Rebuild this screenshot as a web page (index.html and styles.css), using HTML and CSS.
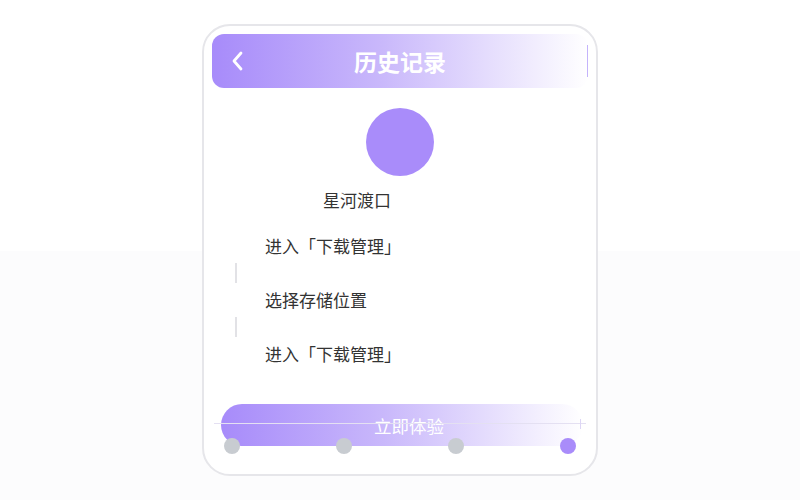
FILE: index.html
```html
<!DOCTYPE html>
<html lang="zh">
<head>
    <meta name="viewport" content="width=device-width, initial-scale=1">
    <title>历史记录</title>
    <link rel="stylesheet" href="styles.css">
</head>
<body>
    <div class="phone">
        <div class="header">
            <svg class="back" width="14" height="22" viewBox="0 0 14 22">
                <path d="M10 3 L3 11 L10 19" fill="none" stroke="white" stroke-width="2.8" stroke-linecap="round" stroke-linejoin="round"/>
            </svg>
            <p class="title">历史记录</p>
            <span class="edge"></span>
        </div>

        <div class="avatar"></div>
        <p class="name">星河渡口</p>

        <div class="steps">
            <p class="step">进入「下载管理」</p>
            <span class="divider"></span>
            <p class="step">选择存储位置</p>
            <span class="divider"></span>
            <p class="step">进入「下载管理」</p>
        </div>

        <div class="action">
            <button class="start">立即体验</button>
            <span class="rule"></span>
            <span class="tick"></span>
        </div>

        <div class="dots">
            <span class="dot"></span>
            <span class="dot"></span>
            <span class="dot"></span>
            <span class="dot active"></span>
        </div>
    </div>
</body>
</html>
```

FILE: styles.css
```css
body {
    margin: 0;
    height: 500px;
    font-family: 'Noto Sans CJK SC', 'Noto Sans', sans-serif;
    background: linear-gradient(#ffffff 251px, #fcfcfd 251px);
    display: flex;
    justify-content: center;
    align-items: flex-start;
}

.phone {
    margin-top: 24px;
    width: 392px;
    height: 448px;
    border: 2px solid #e6e6ea;
    border-radius: 28px;
    background: white;
    display: flex;
    flex-direction: column;
    align-items: center;
    overflow: hidden;
}

.header {
    position: relative;
    flex-shrink: 0;
    margin-top: 8px;
    width: 376px;
    height: 54px;
    box-sizing: border-box;
    border-radius: 12px;
    background: linear-gradient(90deg, #a78bfa 0%, #c9b8fb 45%, #ffffff 100%);
    display: flex;
    align-items: center;
    justify-content: center;
}

.back {
    position: absolute;
    left: 19px;
    top: 16px;
}

.title {
    margin: 0;
    color: white;
    font-size: 23px;
    font-weight: 700;
}

.edge {
    position: absolute;
    right: 0;
    top: 11px;
    width: 1px;
    height: 32px;
    background: #c4b3fb;
}

.avatar {
    flex-shrink: 0;
    margin-top: 20px;
    width: 68px;
    height: 68px;
    border-radius: 50%;
    background: #a98cfa;
}

.name {
    margin: 12px 0 0 0;
    align-self: flex-start;
    padding-left: 119px;
    font-size: 17px;
    line-height: 24px;
    color: #333;
}

.steps {
    align-self: stretch;
    margin-top: 23px;
    display: flex;
    flex-direction: column;
}

.step {
    margin: 0;
    padding-left: 61px;
    font-size: 17px;
    line-height: 22px;
    color: #333;
}

.divider {
    margin: 6px 0 6px 31px;
    width: 2px;
    height: 20px;
    background: #e2e2e6;
}

.action {
    position: relative;
    flex-shrink: 0;
    margin-top: 39px;
    width: 362px;
    height: 42px;
    margin-left: 4px;
}

.start {
    width: 100%;
    height: 42px;
    border: none;
    border-radius: 21px;
    background: linear-gradient(90deg, #a78bfa 0%, #c9b8fb 45%, #ffffff 100%);
    color: white;
    font-family: inherit;
    font-size: 17.5px;
    padding: 0 0 0 14px;
}

.rule {
    position: absolute;
    left: -7px;
    right: -3px;
    top: 19px;
    height: 1px;
    background: #e4e0f2;
}

.tick {
    position: absolute;
    right: 2px;
    top: 15px;
    width: 1px;
    height: 10px;
    background: #ddd6f5;
}

.dots {
    position: relative;
    flex-shrink: 0;
    margin-top: -8px;
    width: 352px;
    display: flex;
    justify-content: space-between;
}

.dot {
    width: 16px;
    height: 16px;
    border-radius: 50%;
    background: #c8ccd1;
}

.dot.active {
    background: #a98cfa;
}
```
